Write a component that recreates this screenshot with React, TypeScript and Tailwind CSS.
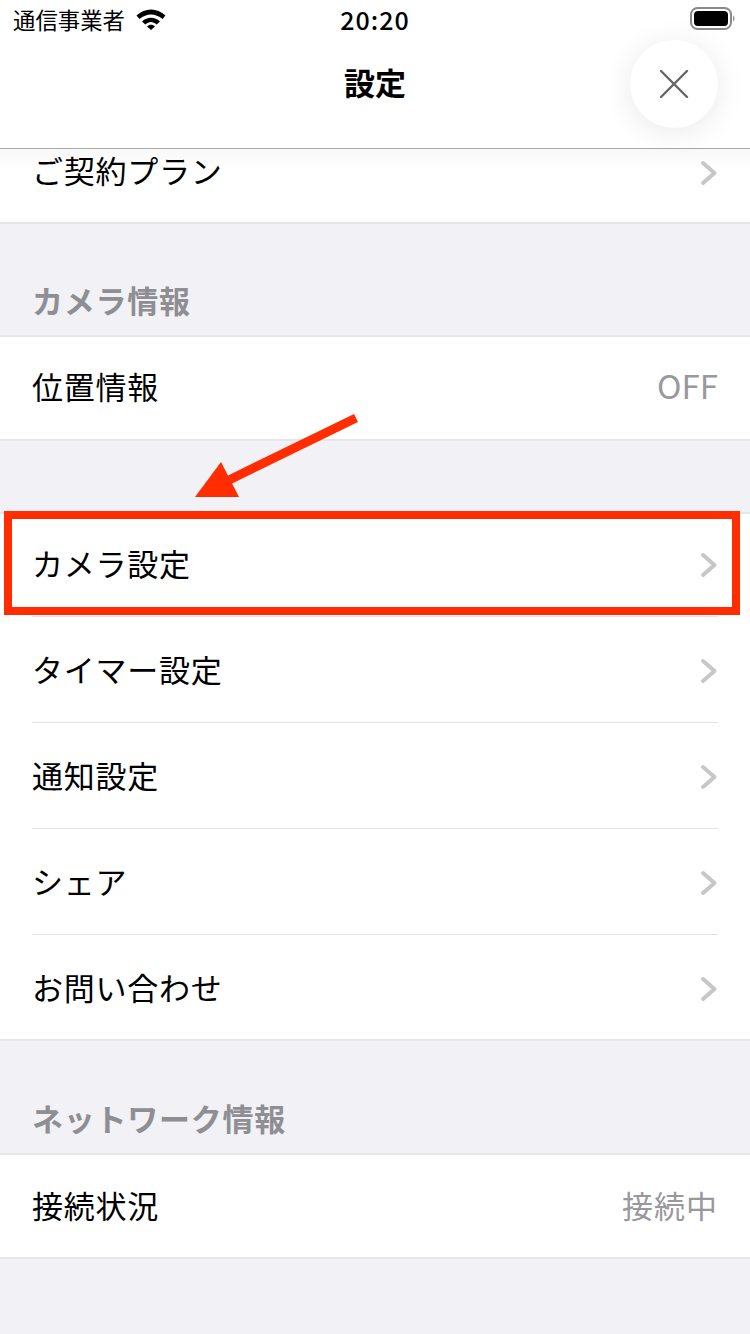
const font = { fontFamily: '"Noto Sans CJK JP", "Liberation Sans", sans-serif' };

function Chevron({ cls = '' }: { cls?: string }) {
  return (
    <svg width="18" height="26" viewBox="0 0 18 26" className={`block ${cls}`}>
      <path d="M3 3 L14.5 13 L3 23" fill="none" stroke="#c7c7c9" strokeWidth="4" strokeLinecap="round" strokeLinejoin="round" />
    </svg>
  );
}

function Row({ label, value, valueCls = '', divider = false, h = 'h-[105px]', labelCls = 'pb-[2px]', chevCls = 'mt-[3px]' }: { label: string; value?: string; valueCls?: string; divider?: boolean; h?: string; labelCls?: string; chevCls?: string }) {
  return (
    <div className={`${h} ml-8 mr-8 flex items-center justify-between ${divider ? 'border-b border-[#e3e3e5] box-content' : ''}`}>
      <span className={`text-[31px] leading-none text-black tracking-[0.75px] ${labelCls}`}>{label}</span>
      {value ? <span className={`leading-none text-[#98989d] ${valueCls}`}>{value}</span> : <Chevron cls={chevCls} />}
    </div>
  );
}

function Section({ title }: { title: string }) {
  return (
    <div className="h-[72px] px-8 flex items-center">
      <span className="text-[31px] font-bold leading-none text-[#8e8e93] tracking-[0.75px]">{title}</span>
    </div>
  );
}

export default function App() {
  return (
    <div className="relative w-[750px] h-[1334px] overflow-hidden bg-[#f1f1f6]" style={font}>
      <header className="h-[149px] bg-white border-b border-[#a9a9ab] relative">
        <div className="h-[40px] flex items-center justify-between pl-[13px] pr-[14px] relative">
          <div className="flex items-center gap-[11px]">
            <span className="text-[22.4px] leading-none text-black pb-[2px]">通信事業者</span>
            <svg width="30" height="22" viewBox="0 0 30 22" className="mb-[2px]">
              <path d="M0.5 7.5 C9 -0.5 21 -0.5 29.5 7.5 L26.5 11 C19.5 5 10.5 5 3.5 11 Z" fill="#000" />
              <path d="M6 13.5 C11.5 8.5 18.5 8.5 24 13.5 L20.7 16.5 C17 13 13 13 9.3 16.5 Z" fill="#000" />
              <path d="M11 18.5 C13.5 16.3 16.5 16.3 19 18.5 L15 22 Z" fill="#000" />
            </svg>
          </div>
          <span className="absolute left-0 right-0 text-center text-[25px] font-medium leading-none text-black tracking-[1px] pb-[2px]">20:20</span>
          <svg width="46" height="24" viewBox="0 0 46 24" className="mb-[2px]">
            <rect x="1" y="1" width="40" height="21" rx="6.5" fill="none" stroke="#8a8a8a" strokeWidth="2" />
            <rect x="4" y="4" width="34" height="15" rx="4" fill="#000" />
            <path d="M43 8.5 C45 9.5 45 13.5 43 14.5 Z" fill="#9a9a9a" />
          </svg>
        </div>
        <div className="absolute left-0 right-0 top-[62px] text-center text-[31px] font-bold leading-[40px] text-black">設定</div>
      </header>

      <main>
        <div className="bg-gradient-to-b from-[#f8f8f8] to-white to-[30%] border-b-2 border-[#e6e6e8] h-[75px] pt-[1px]">
          <Row label="ご契約プラン" h="h-[46px]" labelCls="pb-[8px]" chevCls="" />
        </div>
        <div className="h-[39px]" />
        <Section title="カメラ情報" />
        <div className="bg-white border-y-2 border-[#e6e6e8]">
          <Row label="位置情報" value="OFF" valueCls="text-[33px] pb-[6px]" h="h-[102px]" labelCls="pb-[6px]" />
        </div>
        <div className="h-[71px]" />
        <div className="bg-white border-y-2 border-[#e6e6e8]">
          <Row label="カメラ設定" divider h="h-[102px]" labelCls="pb-[6px]" chevCls="" />
          <Row label="タイマー設定" divider />
          <Row label="通知設定" divider />
          <Row label="シェア" divider />
          <Row label="お問い合わせ" h="h-[104px]" />
        </div>
        <div className="h-[40px]" />
        <Section title="ネットワーク情報" />
        <div className="bg-white border-y-2 border-[#e6e6e8]">
          <Row label="接続状況" value="接続中" valueCls="text-[31px] tracking-[1px] pb-[4px]" h="h-[102px]" labelCls="pb-[4px]" />
        </div>
      </main>

      <button className="absolute left-[630px] top-[40px] w-[88px] h-[88px] rounded-full bg-white shadow-[0_4px_30px_rgba(0,0,0,0.09)] flex items-center justify-center">
        <svg width="30" height="30" viewBox="0 0 30 30">
          <path d="M2 2 L28 28 M28 2 L2 28" stroke="#666" strokeWidth="2.4" strokeLinecap="round" />
        </svg>
      </button>

      <div className="absolute left-[4px] top-[511px] w-[736px] h-[104px] border-[8px] border-[#ff2d00]" />
      <svg className="absolute left-[190px] top-[410px]" width="175" height="92" viewBox="190 410 175 92">
        <path d="M356 418 L225 482" stroke="#ff2d00" strokeWidth="9" fill="none" />
        <path d="M221 462 L195 497 L239 497 Z" fill="#ff2d00" />
      </svg>
    </div>
  );
}
